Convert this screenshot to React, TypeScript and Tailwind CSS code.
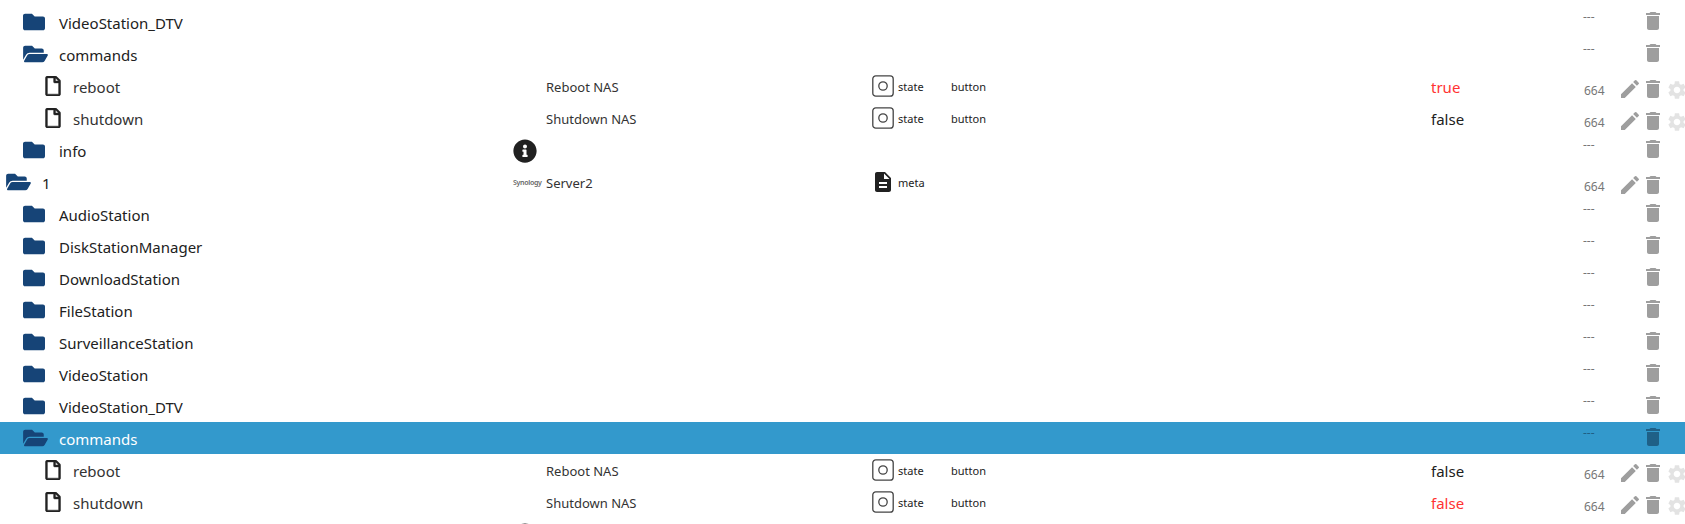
import { FaFolder, FaFolderOpen, FaRegFile, FaInfoCircle } from "react-icons/fa";
import { MdDelete, MdDescription, MdEdit, MdSettings } from "react-icons/md";

type RowData = {
  label: string;
  kind: "folder" | "open" | "file";
  indent?: "root" | "child";
  name?: string;
  logo?: boolean;
  info?: boolean;
  role?: "state" | "meta";
  type?: string;
  value?: string;
  red?: boolean;
  selected?: boolean;
};

const rows: RowData[] = [
  { label: "VideoStation_DTV", kind: "folder" },
  { label: "commands", kind: "open" },
  { label: "reboot", kind: "file", name: "Reboot NAS", role: "state", type: "button", value: "true", red: true },
  { label: "shutdown", kind: "file", name: "Shutdown NAS", role: "state", type: "button", value: "false" },
  { label: "info", kind: "folder", info: true },
  { label: "1", kind: "open", indent: "root", name: "Server2", logo: true, role: "meta" },
  { label: "AudioStation", kind: "folder" },
  { label: "DiskStationManager", kind: "folder" },
  { label: "DownloadStation", kind: "folder" },
  { label: "FileStation", kind: "folder" },
  { label: "SurveillanceStation", kind: "folder" },
  { label: "VideoStation", kind: "folder" },
  { label: "VideoStation_DTV", kind: "folder" },
  { label: "commands", kind: "open", selected: true },
  { label: "reboot", kind: "file", name: "Reboot NAS", role: "state", type: "button", value: "false" },
  { label: "shutdown", kind: "file", name: "Shutdown NAS", role: "state", type: "button", value: "false", red: true },
];

function StateIcon() {
  return (
    <svg viewBox="0 0 22 22" className="w-[22px] h-[22px] shrink-0" fill="none" stroke="#444" strokeWidth="1.3">
      <rect x="0.8" y="0.8" width="20.4" height="20.4" rx="3" />
      <circle cx="11" cy="11" r="4.2" />
    </svg>
  );
}

function TreeIcon({ kind }: { kind: RowData["kind"] }) {
  if (kind === "folder") return <FaFolder className="w-[22px] h-[22px] text-[#164477]" />;
  if (kind === "open") return <FaFolderOpen className="w-[25px] h-[22px] text-[#164477]" />;
  return <FaRegFile className="w-[16px] h-[20px] text-[#222]" stroke="currentColor" strokeWidth={12} />;
}

function Row({ row }: { row: RowData }) {
  const hasRights = !!row.role;
  let labelPad = "pl-[23px] gap-[14px]";
  if (row.kind === "file") labelPad = "pl-[45px] gap-[12px]";
  else if (row.indent === "root") labelPad = "pl-[6px] gap-[11px]";
  else if (row.kind === "open") labelPad = "pl-[23px] gap-[11px]";

  return (
    <div className={`grid grid-cols-[513px_359px_79px_480px_153px_37px_1fr] h-8 shrink-0 ${row.selected ? "bg-[#3399cc] text-white" : "text-[#212121]"}`}>
      <div className={`flex items-center text-[15px] ${labelPad}`}>
        <TreeIcon kind={row.kind} />
        <span className={`pt-[2px] ${row.kind === "file" ? "text-[#333]" : ""}`}>{row.label}</span>
      </div>
      <div className="flex items-center text-[13px] text-[#333]">
        {row.logo && <span className="w-[33px] pt-[2px] text-[7px] tracking-[-0.3px] text-[#666] font-semibold">Synology</span>}
        {row.info && <FaInfoCircle className="w-[24px] h-[24px] mt-[2px] text-[#212121]" />}
        {row.name && <span className={`pt-[3px] ${row.logo ? "" : "pl-[33px]"}`}>{row.name}</span>}
      </div>
      <div className="flex items-center gap-[4px] text-[11px] text-[#222]">
        {row.role === "state" && <StateIcon />}
        {row.role === "meta" && (
          <span className="w-[22px] flex justify-center">
            <MdDescription className="w-6 h-6 shrink-0 text-[#212121]" />
          </span>
        )}
        <span className="pt-[2px]">{row.role}</span>
      </div>
      <div className="flex items-center text-[11px] text-[#222]">
        <span className="pt-[2px]">{row.type}</span>
      </div>
      <div className={`flex items-center text-[15px] ${row.red ? "text-[#ff3333]" : "text-[#212121]"}`}>
        <span className="pt-[2px]">{row.value}</span>
      </div>
      <div className={`text-[12px] ${row.selected ? "text-[#1f5f85]" : "text-[#777]"} ${hasRights ? "pt-[12px]" : "-ml-[1px] pt-[2px]"}`}>
        {hasRights ? "664" : "---"}
      </div>
      <div className={`flex items-start ${hasRights ? "pt-[7px]" : "pt-[3px]"}`}>
        <span className="w-[23px] -ml-[3px] shrink-0">{hasRights && <MdEdit className="w-6 h-6 text-[#9e9e9e]" />}</span>
        <MdDelete className={`w-6 h-6 shrink-0 ${row.selected ? "text-[#1f6087]" : "text-[#9e9e9e]"}`} />
        {hasRights && row.type && <MdSettings className="w-[22px] h-[22px] mt-[2px] ml-[1px] shrink-0 text-[#e3e3e3]" />}
      </div>
    </div>
  );
}

export default function App() {
  return (
    <div className="h-[524px] w-[1685px] overflow-hidden bg-white pt-[6px] flex flex-col font-['Noto_Sans','Open_Sans',sans-serif]">
      {rows.map((row, i) => (
        <Row key={i} row={row} />
      ))}
      {/* next row is scrolled off, only the top of its info icon shows */}
      <div className="h-8 shrink-0 pl-[513px] flex items-center">
        <FaInfoCircle className="w-[24px] h-[24px] mt-[2px] text-[#212121]" />
      </div>
    </div>
  );
}
